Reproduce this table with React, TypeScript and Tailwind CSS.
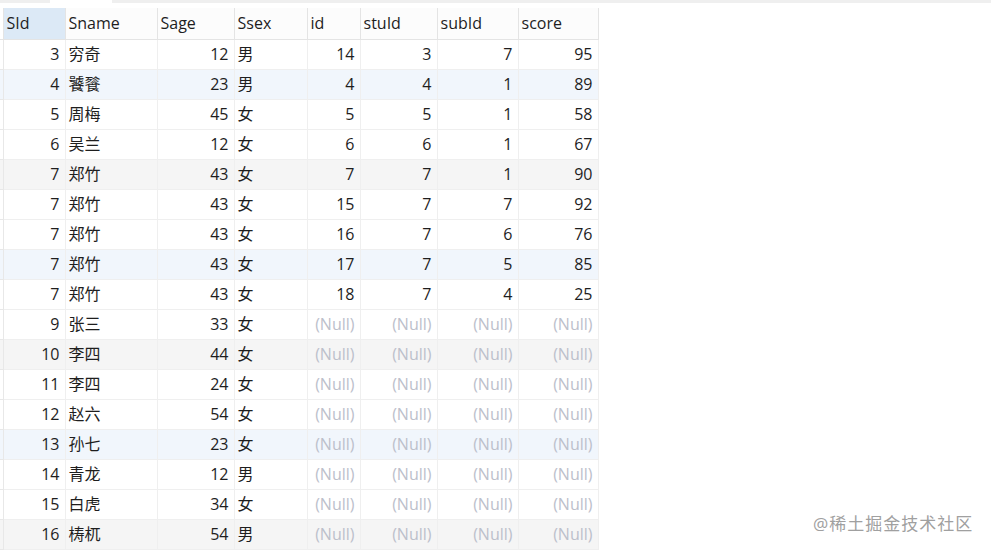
import * as React from 'react'

type Row = {
  sid: number
  sname: string
  sage: number
  ssex: string
  id?: number
  stuId?: number
  subId?: number
  score?: number
}

const rows: Row[] = [
  { sid: 3, sname: '穷奇', sage: 12, ssex: '男', id: 14, stuId: 3, subId: 7, score: 95 },
  { sid: 4, sname: '饕餮', sage: 23, ssex: '男', id: 4, stuId: 4, subId: 1, score: 89 },
  { sid: 5, sname: '周梅', sage: 45, ssex: '女', id: 5, stuId: 5, subId: 1, score: 58 },
  { sid: 6, sname: '吴兰', sage: 12, ssex: '女', id: 6, stuId: 6, subId: 1, score: 67 },
  { sid: 7, sname: '郑竹', sage: 43, ssex: '女', id: 7, stuId: 7, subId: 1, score: 90 },
  { sid: 7, sname: '郑竹', sage: 43, ssex: '女', id: 15, stuId: 7, subId: 7, score: 92 },
  { sid: 7, sname: '郑竹', sage: 43, ssex: '女', id: 16, stuId: 7, subId: 6, score: 76 },
  { sid: 7, sname: '郑竹', sage: 43, ssex: '女', id: 17, stuId: 7, subId: 5, score: 85 },
  { sid: 7, sname: '郑竹', sage: 43, ssex: '女', id: 18, stuId: 7, subId: 4, score: 25 },
  { sid: 9, sname: '张三', sage: 33, ssex: '女' },
  { sid: 10, sname: '李四', sage: 44, ssex: '女' },
  { sid: 11, sname: '李四', sage: 24, ssex: '女' },
  { sid: 12, sname: '赵六', sage: 54, ssex: '女' },
  { sid: 13, sname: '孙七', sage: 23, ssex: '女' },
  { sid: 14, sname: '青龙', sage: 12, ssex: '男' },
  { sid: 15, sname: '白虎', sage: 34, ssex: '女' },
  { sid: 16, sname: '梼杌', sage: 54, ssex: '男' },
]

const cols = [
  { key: 'sid', label: 'SId', w: 'w-[62px]', right: true },
  { key: 'sname', label: 'Sname', w: 'w-[92px]', right: false },
  { key: 'sage', label: 'Sage', w: 'w-[77px]', right: true },
  { key: 'ssex', label: 'Ssex', w: 'w-[73px]', right: false },
  { key: 'id', label: 'id', w: 'w-[53px]', right: true },
  { key: 'stuId', label: 'stuId', w: 'w-[77px]', right: true },
  { key: 'subId', label: 'subId', w: 'w-[81px]', right: true },
  { key: 'score', label: 'score', w: 'w-[80px]', right: true },
] as const

function rowBg(i: number) {
  if (i % 3 !== 1) return 'bg-white'
  return (i - 1) % 6 === 0 ? 'bg-[#f1f6fc]' : 'bg-[#f5f5f5]'
}

export default function App() {
  return (
    <div
      className="relative h-[552px] w-[991px] overflow-hidden bg-white text-[16px] text-[#1e1e1e]"
      style={{ fontFamily: '"Open Sans", "Noto Sans CJK SC", sans-serif' }}
    >
      <div className="flex h-[3px] bg-[#efefef]">
        <div className="w-[50px]" />
        <div className="w-[62px] bg-white" />
      </div>
      <div className="h-[5px]" />
      <table className="table-fixed border-collapse">
        <thead>
          <tr className="h-[31px]">
            <th className="w-[3px] border-r border-b border-[#e4e4e4] bg-white p-0" />
            {cols.map((c, ci) => (
              <th
                key={c.key}
                className={`${c.w} border-r border-b border-[#e4e4e4] px-[3px] text-left font-normal ${
                  ci === 0 ? 'bg-[#dce9f6]' : 'bg-[#fcfcfc]'
                }`}
              >
                {c.label}
              </th>
            ))}
          </tr>
        </thead>
        <tbody>
          {rows.map((r, i) => (
            <tr key={i} className={`h-[30px] ${rowBg(i)}`}>
              <td className="border-r border-b border-[#e8e8e8] p-0" />
              {cols.map((c) => {
                const v = (r as Record<string, unknown>)[c.key]
                const isNull = v === undefined
                return (
                  <td
                    key={c.key}
                    className={`border-r border-b border-[#efefef] leading-none ${
                      c.right ? 'pr-[5px] text-right' : 'pl-[3px] text-left'
                    } ${isNull ? 'text-[#bcc0cb]' : ''}`}
                  >
                    {isNull ? '(Null)' : String(v)}
                  </td>
                )
              })}
            </tr>
          ))}
        </tbody>
      </table>
      <div className="absolute top-[511px] left-[813px] text-[17px] tracking-[1px] text-[#a0a0a0]">
        @稀土掘金技术社区
      </div>
    </div>
  )
}
